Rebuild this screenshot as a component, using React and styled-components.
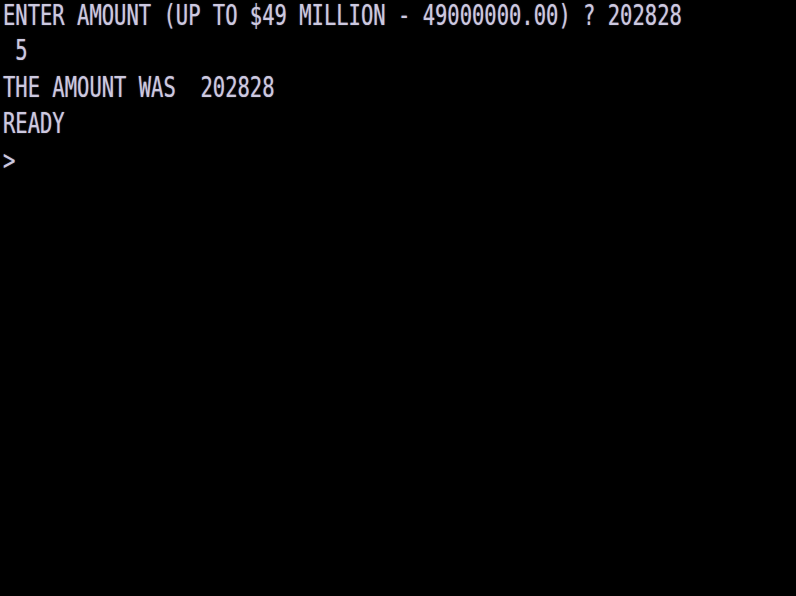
import styled, { createGlobalStyle } from 'styled-components'

const GlobalStyle = createGlobalStyle`
  html, body {
    margin: 0;
    padding: 0;
    background: #000;
  }
  #root {
    min-height: 100vh;
  }
`

const Screen = styled.div`
  width: 796px;
  height: 596px;
  background: #000;
  overflow: hidden;
`

// the old CRT font is tall and narrow: stretch a mono font vertically
const Terminal = styled.div`
  display: flex;
  flex-direction: column;
  gap: 8.5px;
  padding: 1.8px 0 0 3px;
  font-family: "DejaVu Sans Mono", "Liberation Mono", monospace;
  font-size: 20.5px;
  line-height: 18px;
  color: #cdc9e0;
  text-shadow: 0 0 1px rgba(205,201,224,0.6);
  transform: scaleY(1.37);
  transform-origin: 0 0;
`

const Line = styled.div`
  white-space: pre;
  height: 18px;
`

const lines = [
  'ENTER AMOUNT (UP TO $49 MILLION - 49000000.00) ? 202828',
  ' 5',
  'THE AMOUNT WAS  202828',
  'READY',
  '>',
]

const App = () => {
  return (
    <Screen>
      <GlobalStyle />
      <Terminal>
        {lines.map((txt, i) => (
          <Line key={i}>{txt}</Line>
        ))}
      </Terminal>
    </Screen>
  )
}

export default App
